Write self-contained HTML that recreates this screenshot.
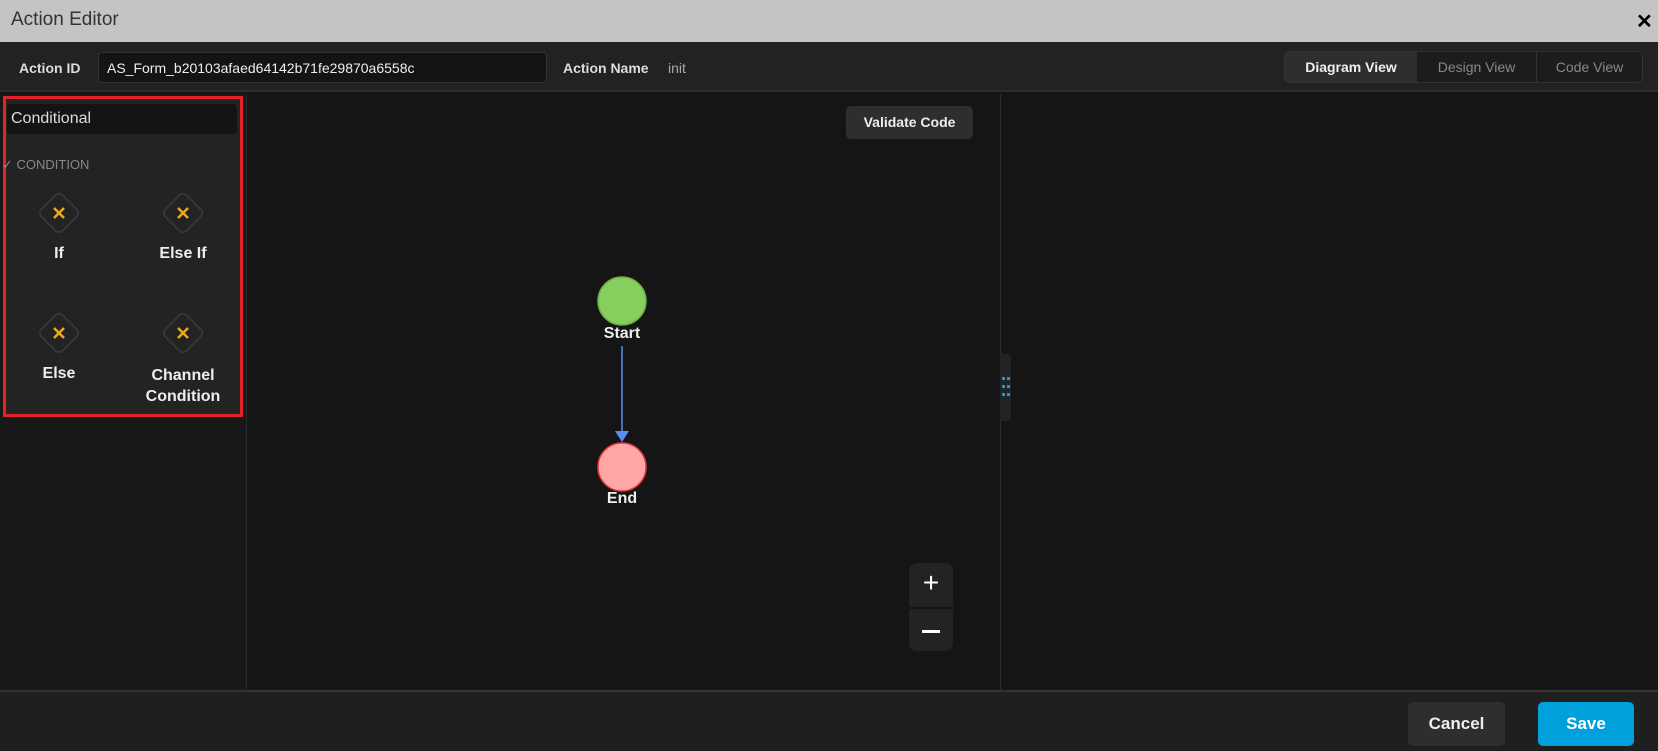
<!DOCTYPE html>
<html><head><style>
*{box-sizing:border-box;margin:0;padding:0}
body{width:1658px;height:751px;overflow:hidden;background:#151515;font-family:"Liberation Sans",sans-serif;position:relative;color:#ddd}
.a{position:absolute}
</style></head><body>
<div class="a" style="left:0;top:0;width:1658px;height:42px;background:#c4c4c4"></div>
<div class="a" style="left:11px;top:9px;font-size:19px;color:#333">Action Editor</div>
<div class="a" style="left:1636px;top:9px;font-size:20px;font-weight:bold;color:#000">✕</div>
<div class="a" style="left:0;top:42px;width:1658px;height:50px;background:#222;border-bottom:2px solid #2e2e2e"></div>
<div class="a" style="left:19px;top:60px;font-size:14px;font-weight:bold;color:#ddd">Action ID</div>
<div class="a" style="left:98px;top:52px;width:449px;height:31px;background:#141414;border:1px solid #333;border-radius:4px;font-size:14px;color:#eee;padding:7px 8px">AS_Form_b20103afaed64142b71fe29870a6558c</div>
<div class="a" style="left:563px;top:60px;font-size:14px;font-weight:bold;color:#ddd">Action Name</div>
<div class="a" style="left:668px;top:60px;font-size:14px;color:#aaa">init</div>
<div class="a" style="left:1284px;top:51px;width:359px;height:32px;background:#1c1c1c;border:1px solid #333;border-radius:5px;display:flex;font-size:14px;overflow:hidden">
<div style="width:132px;background:#2e2e2e;color:#eee;font-weight:bold;text-align:center;line-height:30px">Diagram View</div>
<div style="width:120px;color:#888;text-align:center;line-height:30px;border-right:1px solid #333">Design View</div>
<div style="flex:1;color:#888;text-align:center;line-height:30px">Code View</div></div>
<!-- left panel -->
<div class="a" style="left:0;top:94px;width:247px;height:596px;background:#181818;border-right:1px solid #2a2a2a"></div>
<div class="a" style="left:3px;top:96px;width:240px;height:321px;background:#232323;border:3px solid #e3232b"></div>
<div class="a" style="left:7px;top:104px;width:230px;height:30px;background:#141414;border-radius:4px;font-size:16px;color:#ddd;padding:6px 4px">Conditional</div>
<div class="a" style="left:2px;top:157px;font-size:13px;color:#888">✓ CONDITION</div>
<svg class="a" style="left:0;top:0" width="247" height="420">
<g fill="none" stroke="#3a3a3a" stroke-width="1.5">
<rect x="44" y="198" width="30" height="30" rx="5" transform="rotate(45 59 213)"/>
<rect x="168" y="198" width="30" height="30" rx="5" transform="rotate(45 183 213)"/>
<rect x="44" y="318" width="30" height="30" rx="5" transform="rotate(45 59 333)"/>
<rect x="168" y="318" width="30" height="30" rx="5" transform="rotate(45 183 333)"/></g>
<g stroke="#f0a818" stroke-width="2.5">
<path d="M54 208l10 10M64 208l-10 10"/><path d="M178 208l10 10M188 208l-10 10"/>
<path d="M54 328l10 10M64 328l-10 10"/><path d="M178 328l10 10M188 328l-10 10"/></g></svg>
<div class="a" style="left:19px;top:245px;width:80px;text-align:center;font-size:16px;font-weight:bold;color:#eee">If</div>
<div class="a" style="left:133px;top:245px;width:100px;text-align:center;font-size:16px;font-weight:bold;color:#eee">Else If</div>
<div class="a" style="left:19px;top:365px;width:80px;text-align:center;font-size:16px;font-weight:bold;color:#eee">Else</div>
<div class="a" style="left:133px;top:365px;width:100px;text-align:center;font-size:16px;font-weight:bold;color:#eee;line-height:21px">Channel<br>Condition</div>
<!-- canvas -->
<div class="a" style="left:1000px;top:94px;width:1px;height:596px;background:#2e2e2e"></div>
<div class="a" style="left:1000px;top:354px;width:11px;height:67px;background:#232323;border-radius:0 4px 4px 0"></div>
<svg class="a" style="left:1001px;top:376px" width="10" height="22"><g fill="#1a9be0"><rect x="1" y="1" width="3" height="3"/><rect x="6" y="1" width="3" height="3"/><rect x="1" y="9" width="3" height="3"/><rect x="6" y="9" width="3" height="3"/><rect x="1" y="17" width="3" height="3"/><rect x="6" y="17" width="3" height="3"/></g></svg>
<div class="a" style="left:846px;top:106px;width:127px;height:33px;background:#2e2e2e;border-radius:5px;font-size:14px;font-weight:bold;color:#eee;text-align:center;line-height:33px">Validate Code</div>
<svg class="a" style="left:580px;top:270px" width="90" height="240">
<circle cx="42" cy="31" r="24" fill="#86cf5e" stroke="#6aae45" stroke-width="1.5"/>
<line x1="42" y1="76" x2="42" y2="163" stroke="#5a8cf5" stroke-width="1.5"/>
<path d="M35 161h14l-7 11z" fill="#5a8cf5"/>
<circle cx="42" cy="197" r="24" fill="#ffa6a6" stroke="#e83a3a" stroke-width="1.5"/></svg>
<div class="a" style="left:582px;top:325px;width:80px;text-align:center;font-size:16px;font-weight:bold;color:#eee">Start</div>
<div class="a" style="left:582px;top:490px;width:80px;text-align:center;font-size:16px;font-weight:bold;color:#eee">End</div>
<div class="a" style="left:909px;top:563px;width:44px;height:88px;background:#232323;border-radius:8px"></div>
<div class="a" style="left:909px;top:607px;width:44px;height:2px;background:#151515"></div>
<div class="a" style="left:909px;top:567px;width:44px;text-align:center;font-size:28px;color:#fff">+</div>
<div class="a" style="left:922px;top:630px;width:18px;height:3px;background:#fff"></div>
<!-- footer -->
<div class="a" style="left:0;top:690px;width:1658px;height:61px;background:#1f1f1f;border-top:2px solid #333"></div>
<div class="a" style="left:1408px;top:702px;width:97px;height:44px;background:#2e2e2e;border-radius:5px;font-size:17px;font-weight:bold;color:#eee;text-align:center;line-height:44px">Cancel</div>
<div class="a" style="left:1538px;top:702px;width:96px;height:44px;background:#00a0dc;border-radius:5px;font-size:17px;font-weight:bold;color:#fff;text-align:center;line-height:44px">Save</div>
</body></html>
